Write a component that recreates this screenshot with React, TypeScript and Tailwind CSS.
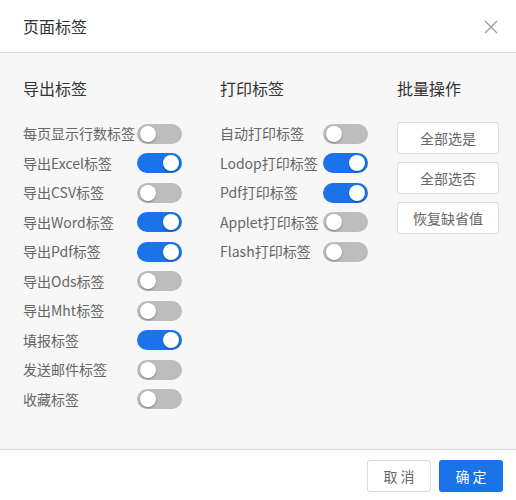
import React from "react";

const font = { fontFamily: '"Noto Sans CJK SC", "Noto Sans", sans-serif' };

function Toggle({ on }: { on: boolean }) {
  return (
    <div
      className={`relative h-[20px] w-[45px] shrink-0 rounded-full ${on ? "bg-[#1a73e8]" : "bg-[#bdbdbd]"}`}
    >
      <div
        className={`absolute top-[2px] h-[16px] w-[16px] rounded-full bg-white shadow-[0_1px_2px_rgba(0,0,0,0.35)] ${on ? "right-[3px]" : "left-[3px]"}`}
      />
    </div>
  );
}

function Row({ label, on, labelW }: { label: string; on: boolean; labelW: string }) {
  return (
    <div className="flex h-[29.5px] items-center">
      <div className={`${labelW} shrink-0 text-[14px] text-[#666] whitespace-nowrap`}>{label}</div>
      <Toggle on={on} />
    </div>
  );
}

export default function App() {
  const exportRows: [string, boolean][] = [
    ["每页显示行数标签", false],
    ["导出Excel标签", true],
    ["导出CSV标签", false],
    ["导出Word标签", true],
    ["导出Pdf标签", true],
    ["导出Ods标签", false],
    ["导出Mht标签", false],
    ["填报标签", true],
    ["发送邮件标签", false],
    ["收藏标签", false],
  ];
  const printRows: [string, boolean][] = [
    ["自动打印标签", false],
    ["Lodop打印标签", true],
    ["Pdf打印标签", true],
    ["Applet打印标签", false],
    ["Flash打印标签", false],
  ];
  return (
    <div className="flex h-[500px] w-[516px] flex-col bg-white" style={font}>
      <div className="flex h-[53px] shrink-0 items-center justify-between border-b border-[#dcdcdc] pl-[23px] pr-[18px]">
        <div className="text-[16px] text-[#333]">页面标签</div>
        <svg width="14" height="14" viewBox="0 0 14 14" className="mt-[2px]">
          <path d="M1 1 L13 13 M13 1 L1 13" stroke="#999" strokeWidth="1.1" fill="none" />
        </svg>
      </div>
      <div className="flex flex-1 bg-[#f7f7f7] pl-[23px] pt-[23px]">
        <div className="w-[197px] shrink-0">
          <div className="h-[24px] text-[16px] leading-[24px] text-[#333]">导出标签</div>
          <div className="mt-[19px]">
            {exportRows.map(([l, o]) => (
              <Row key={l} label={l} on={o} labelW="w-[114px]" />
            ))}
          </div>
        </div>
        <div className="w-[177px] shrink-0">
          <div className="h-[24px] text-[16px] leading-[24px] text-[#333]">打印标签</div>
          <div className="mt-[19px]">
            {printRows.map(([l, o]) => (
              <Row key={l} label={l} on={o} labelW="w-[103px]" />
            ))}
          </div>
        </div>
        <div className="w-[102px] shrink-0">
          <div className="h-[24px] text-[16px] leading-[24px] text-[#333]">批量操作</div>
          <div className="mt-[22px] flex flex-col gap-[8px]">
            {["全部选是", "全部选否", "恢复缺省值"].map((t) => (
              <div
                key={t}
                className="flex h-[32px] w-[102px] items-center justify-center rounded-[3px] border border-[#dcdcdc] bg-white text-[14px] text-[#666]"
              >
                {t}
              </div>
            ))}
          </div>
        </div>
      </div>
      <div className="flex h-[51px] shrink-0 items-start justify-end gap-[8px] border-t border-[#d6d6d6] pr-[13px] pt-[10px]">
        <div className="flex h-[32px] w-[64px] items-center justify-center rounded-[3px] border border-[#dcdcdc] bg-white text-[14px] text-[#666]">
          取 消
        </div>
        <div className="flex h-[32px] w-[64px] items-center justify-center rounded-[3px] bg-[#1a73e8] text-[14px] text-white">
          确 定
        </div>
      </div>
    </div>
  );
}
